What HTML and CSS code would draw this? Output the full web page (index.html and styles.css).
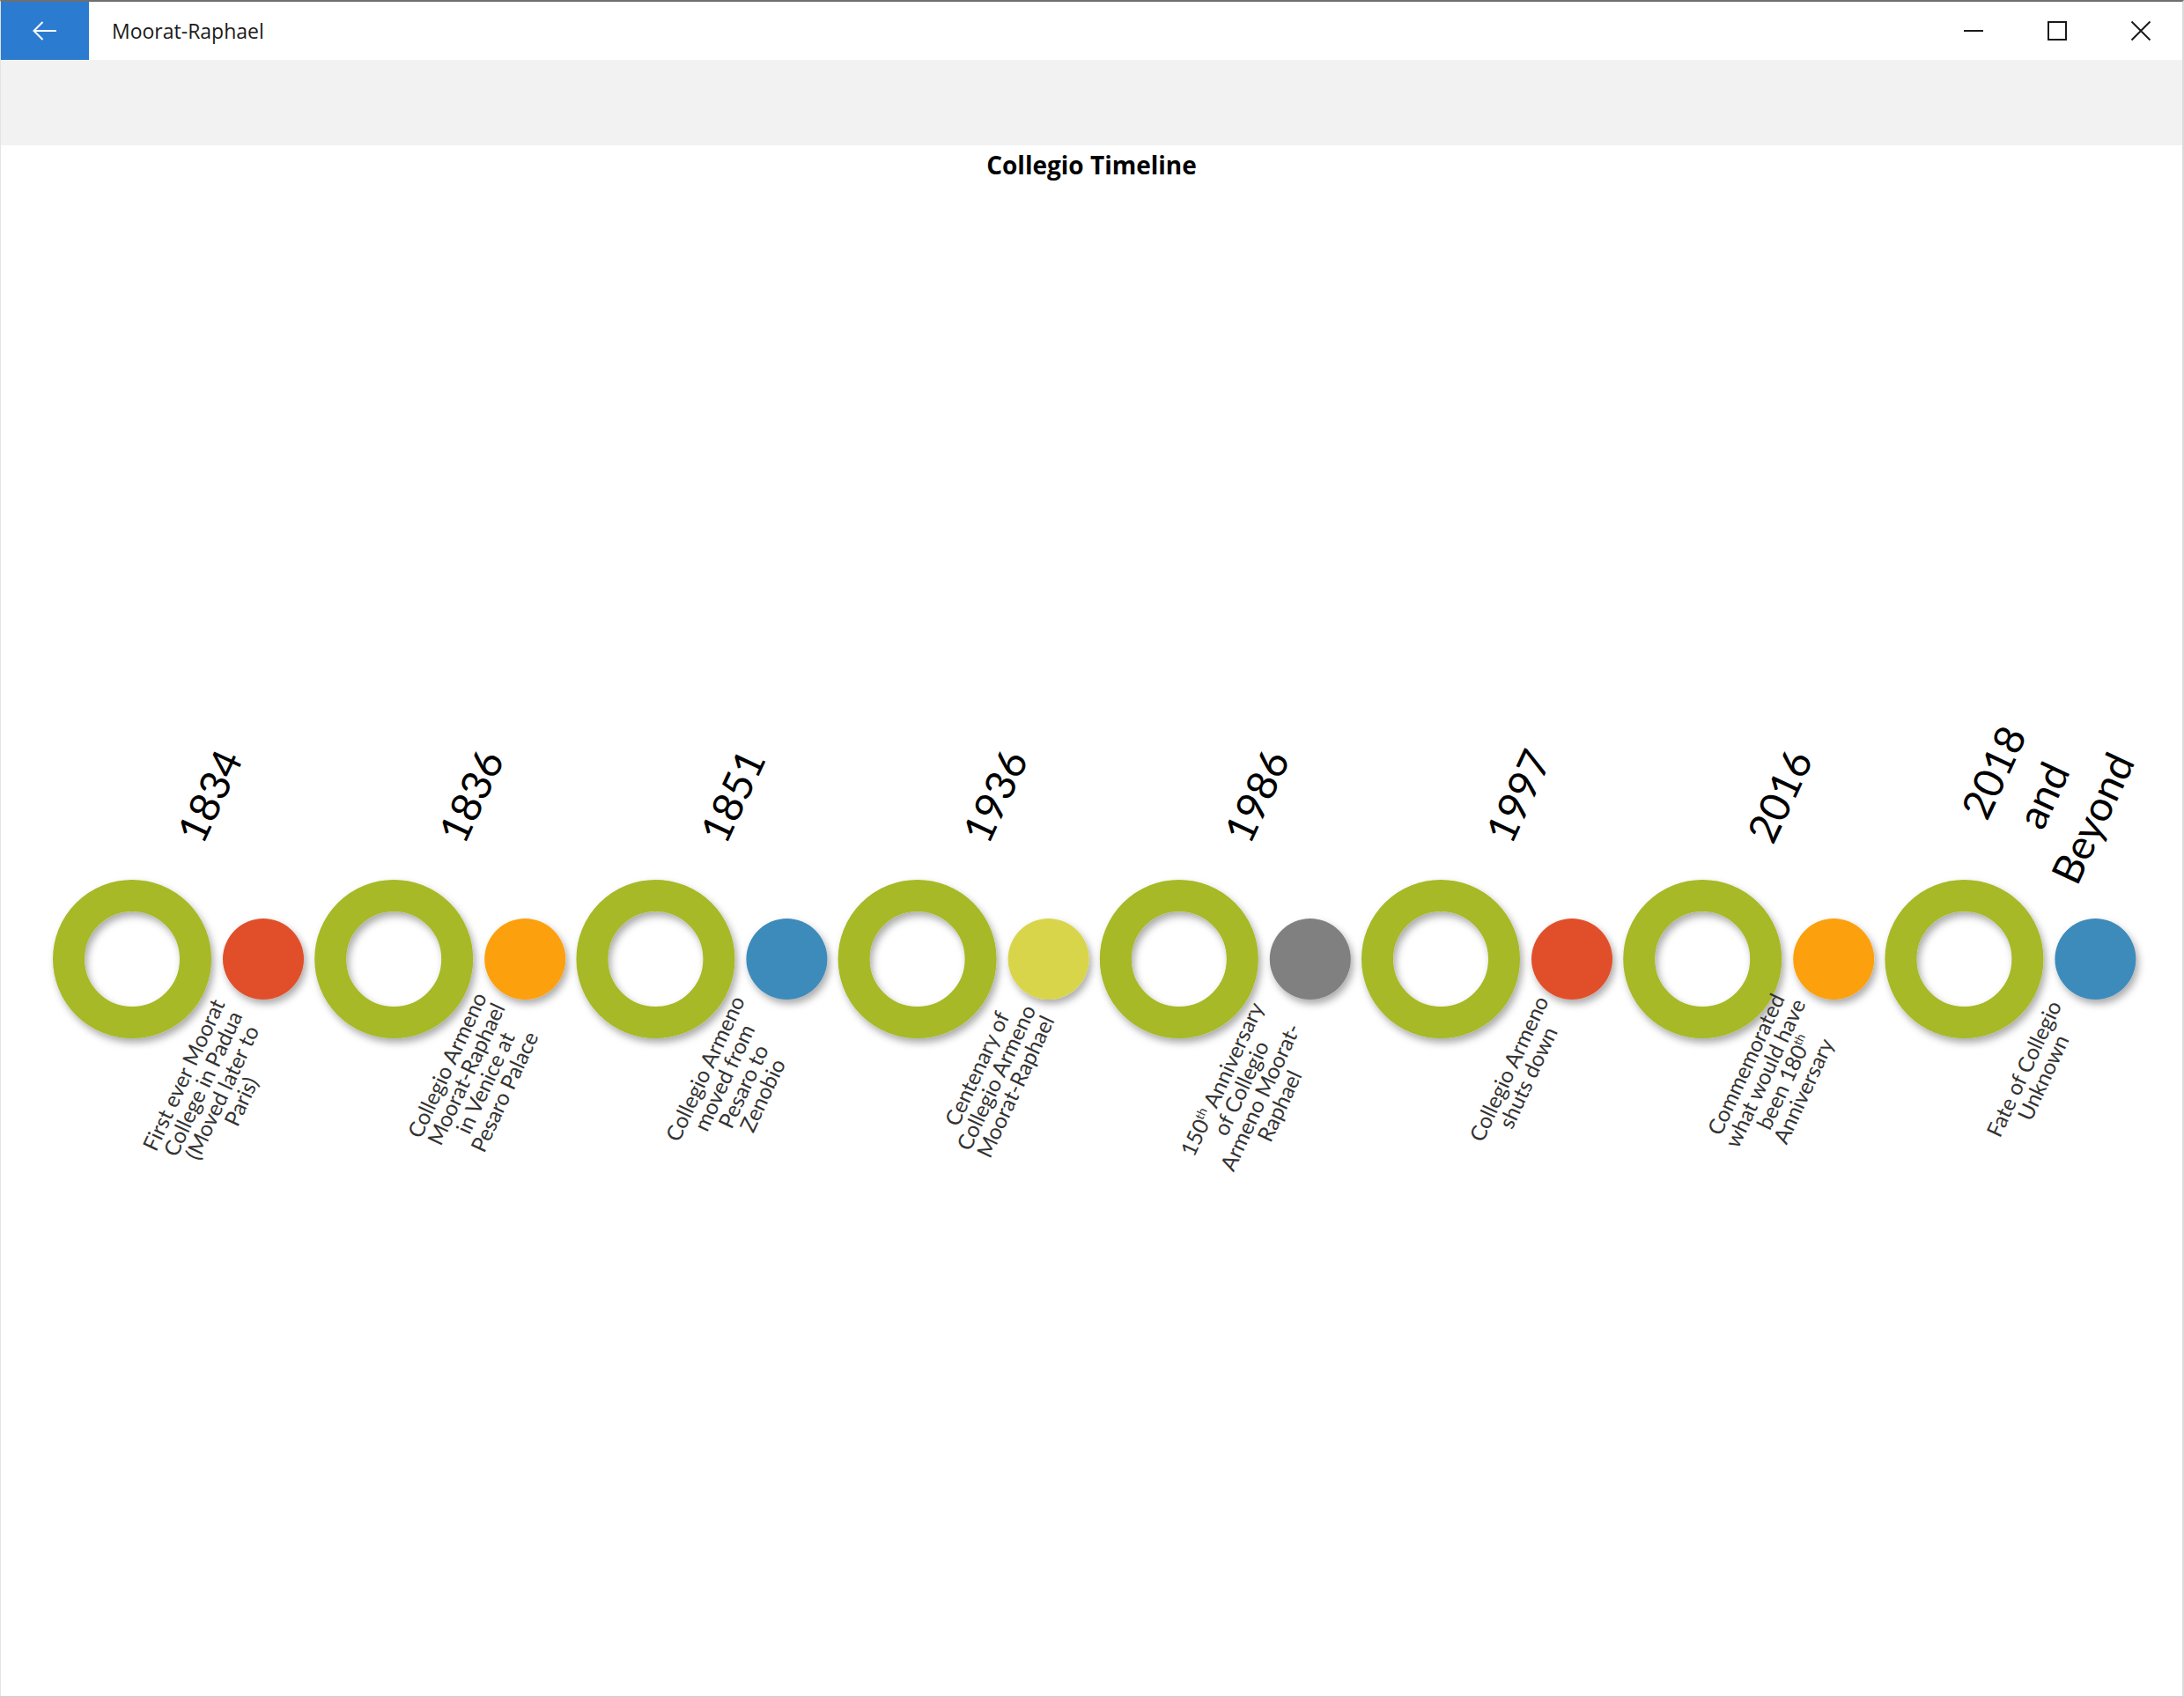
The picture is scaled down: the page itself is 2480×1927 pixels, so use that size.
FILE: index.html
```html
<!DOCTYPE html>
<html lang="en">
<head>
<meta charset="utf-8">
<title>Moorat-Raphael</title>
<link rel="stylesheet" href="styles.css">
</head>
<body>
<div class="window">
  <header class="titlebar">
    <button class="back" aria-label="Back">
      <svg width="28" height="22" viewBox="0 0 28 22"><path d="M1.5 11 H27 M11.5 1 L1.5 11 L11.5 21" fill="none" stroke="#fff" stroke-width="2"/></svg>
    </button>
    <span class="app-title">Moorat-Raphael</span>
    <div class="controls">
      <span class="ctl"><svg width="24" height="24" viewBox="0 0 24 24"><path d="M1 12 H23" stroke="#1a1a1a" stroke-width="2"/></svg></span>
      <span class="ctl"><svg width="24" height="24" viewBox="0 0 24 24"><rect x="2" y="2" width="20" height="20" fill="none" stroke="#1a1a1a" stroke-width="2"/></svg></span>
      <span class="ctl"><svg width="24" height="24" viewBox="0 0 24 24"><path d="M1.5 1.5 L22.5 22.5 M22.5 1.5 L1.5 22.5" stroke="#1a1a1a" stroke-width="2"/></svg></span>
    </div>
  </header>
  <div class="toolbar"></div>
  <main class="content">
    <h1 class="page-title">Collegio Timeline</h1>
    <svg class="timeline" viewBox="1 206 2477 1720" width="2477" height="1720">
      <defs>
        <filter id="sh" x="-30%" y="-30%" width="170%" height="170%">
          <feDropShadow dx="3" dy="5" stdDeviation="4" flood-color="#000" flood-opacity="0.33"/>
        </filter>
      </defs>
      <g class="rings" filter="url(#sh)">
        <circle cx="150" cy="1089" r="72" class="ring"/>
        <circle cx="447.2" cy="1089" r="72" class="ring"/>
        <circle cx="744.4" cy="1089" r="72" class="ring"/>
        <circle cx="1041.6" cy="1089" r="72" class="ring"/>
        <circle cx="1338.8" cy="1089" r="72" class="ring"/>
        <circle cx="1636" cy="1089" r="72" class="ring"/>
        <circle cx="1933.2" cy="1089" r="72" class="ring"/>
        <circle cx="2230.4" cy="1089" r="72" class="ring"/>
      </g>
      <g class="dots" filter="url(#sh)">
        <circle cx="299" cy="1089" r="46" class="dot red"/>
        <circle cx="596.2" cy="1089" r="46" class="dot orange"/>
        <circle cx="893.4" cy="1089" r="46" class="dot blue"/>
        <circle cx="1190.6" cy="1089" r="46" class="dot yellow"/>
        <circle cx="1487.8" cy="1089" r="46" class="dot grey"/>
        <circle cx="1785" cy="1089" r="46" class="dot red"/>
        <circle cx="2082.2" cy="1089" r="46" class="dot orange"/>
        <circle cx="2379.4" cy="1089" r="46" class="dot blue"/>
      </g>
      <g class="years">
        <text transform="translate(238 904) rotate(-65)"><tspan x="0" dy="17">1834</tspan></text>
        <text transform="translate(535 904) rotate(-65)"><tspan x="0" dy="17">1836</tspan></text>
        <text transform="translate(832 904) rotate(-65)"><tspan x="0" dy="17">1851</tspan></text>
        <text transform="translate(1130 904) rotate(-65)"><tspan x="0" dy="17">1936</tspan></text>
        <text transform="translate(1427 904) rotate(-65)"><tspan x="0" dy="17">1986</tspan></text>
        <text transform="translate(1724 904) rotate(-65)"><tspan x="0" dy="17">1997</tspan></text>
        <text transform="translate(2021 904) rotate(-65)"><tspan x="0" dy="17">2016</tspan></text>
        <text transform="translate(2320 903) rotate(-65)"><tspan x="0" dy="-45">2018</tspan><tspan x="0" dy="62">and</tspan><tspan x="0" dy="62">Beyond</tspan></text>
      </g>
      <g class="notes">
        <text transform="translate(242 1236) rotate(-65)"><tspan x="0" dy="-28">First ever Moorat</tspan><tspan x="0" dy="24">College in Padua</tspan><tspan x="0" dy="24">(Moved later to</tspan><tspan x="0" dy="24">Paris)</tspan></text>
        <text transform="translate(541 1225) rotate(-65)"><tspan x="0" dy="-28">Collegio Armeno</tspan><tspan x="0" dy="24">Moorat-Raphael</tspan><tspan x="0" dy="24">in Venice at</tspan><tspan x="0" dy="24">Pesaro Palace</tspan></text>
        <text transform="translate(834 1229) rotate(-65)"><tspan x="0" dy="-28">Collegio Armeno</tspan><tspan x="0" dy="24">moved from</tspan><tspan x="0" dy="24">Pesaro to</tspan><tspan x="0" dy="24">Zenobio</tspan></text>
        <text transform="translate(1132 1224) rotate(-65)"><tspan x="0" dy="-16">Centenary of</tspan><tspan x="0" dy="24">Collegio Armeno</tspan><tspan x="0" dy="24">Moorat-Raphael</tspan></text>
        <text transform="translate(1421 1241) rotate(-65)"><tspan x="0" dy="-28">150<tspan class="sup" dy="-9">th</tspan><tspan dy="9"> Anniversary</tspan></tspan><tspan x="0" dy="24">of Collegio</tspan><tspan x="0" dy="24">Armeno Moorat-</tspan><tspan x="0" dy="24">Raphael</tspan></text>
        <text transform="translate(1725 1219) rotate(-65)"><tspan x="0" dy="-4">Collegio Armeno</tspan><tspan x="0" dy="24">shuts down</tspan></text>
        <text transform="translate(2016 1224) rotate(-65)"><tspan x="0" dy="-28">Commemorated</tspan><tspan x="0" dy="24">what would have</tspan><tspan x="0" dy="24">been 180<tspan class="sup" dy="-9">th</tspan></tspan><tspan x="0" dy="33">Anniversary</tspan></text>
        <text transform="translate(2310 1219) rotate(-65)"><tspan x="0" dy="-4">Fate of Collegio</tspan><tspan x="0" dy="24">Unknown</tspan></text>
      </g>
    </svg>
  </main>
</div>
</body>
</html>
```

FILE: styles.css
```css
* { box-sizing: border-box; }
html, body { margin: 0; padding: 0; background: #ffffff; }
body { width: 2480px; height: 1927px; overflow: hidden; font-family: "Open Sans", "Noto Sans", sans-serif; }

.window {
  width: 2480px;
  height: 1927px;
  display: flex;
  flex-direction: column;
  border-top: 2px solid #6f6f6f;
  border-left: 1px solid #e4e4e4;
  border-right: 2px solid #dadada;
  border-bottom: 1px solid #cfcfcf;
  background: #ffffff;
}

.titlebar {
  height: 66px;
  flex: 0 0 66px;
  display: flex;
  align-items: center;
  background: #ffffff;
}

.back {
  width: 100px;
  height: 66px;
  border: 0;
  padding: 0;
  margin: 0;
  background: #2b7bd0;
  display: flex;
  align-items: center;
  justify-content: center;
}

.app-title {
  margin-left: 26px;
  font-size: 23px;
  line-height: 66px;
  color: #1b1b1b;
}

.controls {
  margin-left: auto;
  display: flex;
  height: 66px;
}

.ctl {
  width: 95px;
  height: 66px;
  display: flex;
  align-items: center;
  justify-content: center;
}

.toolbar {
  height: 97px;
  flex: 0 0 97px;
  background: #f2f2f2;
}

.content {
  flex: 1;
  display: flex;
  flex-direction: column;
}

.page-title {
  margin: 0;
  padding-top: 3px;
  font-size: 28px;
  line-height: 38px;
  font-weight: 700;
  text-align: center;
  color: #000000;
}

.timeline { display: block; }

.ring { fill: none; stroke: #a7b928; stroke-width: 36; }
.dot.red { fill: #e1502a; }
.dot.orange { fill: #fda00c; }
.dot.blue { fill: #3e8bbb; }
.dot.yellow { fill: #d9d54b; }
.dot.grey { fill: #808081; }

.years text {
  font-family: Lato, "Open Sans", sans-serif;
  font-size: 47px;
  fill: #000000;
  text-anchor: middle;
}

.notes text {
  font-family: Lato, "Open Sans", sans-serif;
  font-size: 24.5px;
  fill: #333333;
  text-anchor: middle;
}

.notes .sup { font-size: 14px; }
```
